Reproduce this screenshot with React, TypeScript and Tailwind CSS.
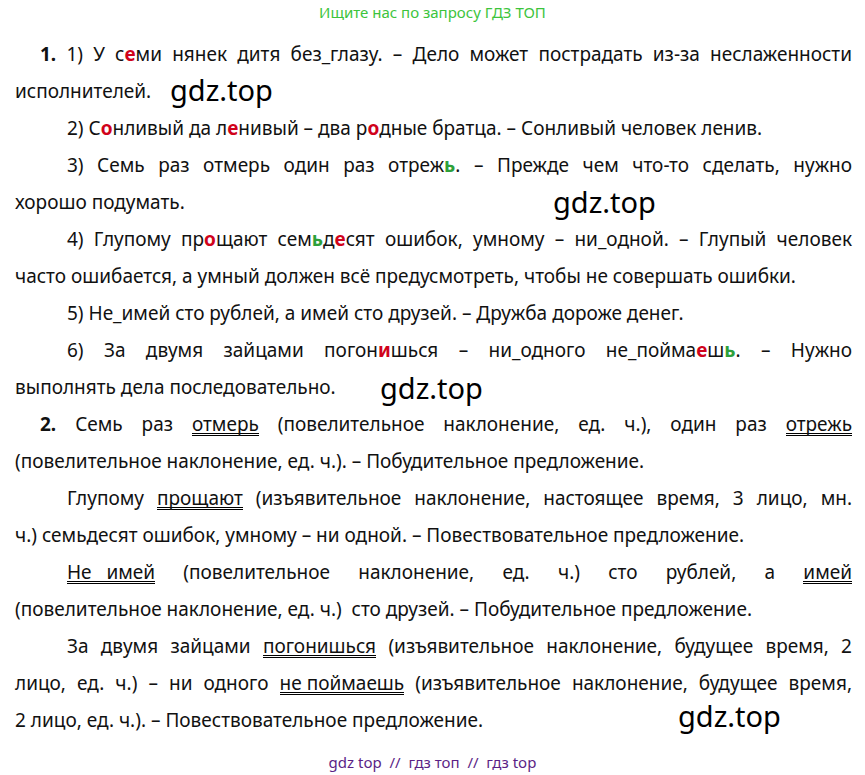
import React from 'react';

const R = ({ c }: { c: string }) => <b className="text-[#d0021b] font-bold">{c}</b>;
const G = ({ c }: { c: string }) => <b className="text-[#2ea03a] font-bold">{c}</b>;
const U = ({ children }: { children: React.ReactNode }) => (
  <span className="border-b-[3px] border-double border-black leading-[18px] inline-block">{children}</span>
);

// one visual line; justified unless it's the last of a paragraph
const L = ({ children, last, indent }: { children: React.ReactNode; last?: boolean; indent?: string }) => (
  <div className={`h-[37px] leading-[37px] whitespace-nowrap ${last ? '' : 'text-justify [text-align-last:justify]'} ${indent ?? ''}`}>
    {children}
  </div>
);

const Mark = ({ className }: { className: string }) => (
  <span className={`absolute text-[29px] text-black font-['Roboto',sans-serif] leading-none ${className}`}>gdz.top</span>
);

export default function App() {
  return (
    <main className="relative w-[865px] h-[775px] bg-white overflow-hidden font-['Liberation_Sans',Arial,sans-serif] text-[19px] text-[#111]">
      <p className="text-center text-[15px] text-[#3cc43c] pt-[2px] leading-[20px] font-['Roboto',sans-serif]">Ищите нас по запросу ГДЗ ТОП</p>

      <div className="pl-[15px] pr-[13px] pt-[14px]">
        <L indent="pl-[25px]"><b>1.</b> 1) У с<R c="е" />ми нянек дитя без_глазу. – Дело может пострадать из-за неслаженности</L>
        <L last>исполнителей.</L>
        <L last indent="pl-[52px]">2) С<R c="о" />нливый да л<R c="е" />нивый – два р<R c="о" />дные братца. – Сонливый человек ленив.</L>
        <L indent="pl-[52px]">3) Семь раз отмерь один раз отреж<G c="ь" />. – Прежде чем что-то сделать, нужно</L>
        <L last>хорошо подумать.</L>
        <L indent="pl-[52px]">4) Глупому пр<R c="о" />щают сем<G c="ь" />д<R c="е" />сят ошибок, умному – ни_одной. – Глупый человек</L>
        <L last>часто ошибается, а умный должен всё предусмотреть, чтобы не совершать ошибки.</L>
        <L last indent="pl-[52px]">5) Не_имей сто рублей, а имей сто друзей. – Дружба дороже денег.</L>
        <L indent="pl-[52px]">6) За двумя зайцами погон<R c="и" />шься – ни_одного не_пойма<R c="е" />ш<G c="ь" />. – Нужно</L>
        <L last>выполнять дела последовательно.</L>
        <L indent="pl-[25px]"><b>2.</b> Семь раз <U>отмерь</U> (повелительное наклонение, ед. ч.), один раз <U>отрежь</U></L>
        <L last>(повелительное наклонение, ед. ч.). – Побудительное предложение.</L>
        <L indent="pl-[52px]">Глупому <U>прощают</U> (изъявительное наклонение, настоящее время, 3 лицо, мн.</L>
        <L last>ч.) семьдесят ошибок, умному – ни одной. – Повествовательное предложение.</L>
        <L indent="pl-[52px]"><U>Не&nbsp;&nbsp;&nbsp;имей</U> (повелительное наклонение, ед. ч.) сто рублей, а <U>имей</U></L>
        <L last>(повелительное наклонение, ед. ч.)&nbsp; сто друзей. – Побудительное предложение.</L>
        <L indent="pl-[52px]">За двумя зайцами <U>погонишься</U> (изъявительное наклонение, будущее время, 2</L>
        <L>лицо, ед. ч.) – ни одного <U>не поймаешь</U> (изъявительное наклонение, будущее время,</L>
        <L last>2 лицо, ед. ч.). – Повествовательное предложение.</L>
      </div>

      <p className="text-center text-[15px] text-[#5b1f86] mt-[12px] whitespace-pre font-['Roboto',sans-serif]">gdz top  //  гдз топ  //  гдз top</p>

      <Mark className="left-[170px] top-[75px]" />
      <Mark className="left-[553px] top-[187px]" />
      <Mark className="left-[380px] top-[373px]" />
      <Mark className="left-[678px] top-[701px]" />
    </main>
  );
}
